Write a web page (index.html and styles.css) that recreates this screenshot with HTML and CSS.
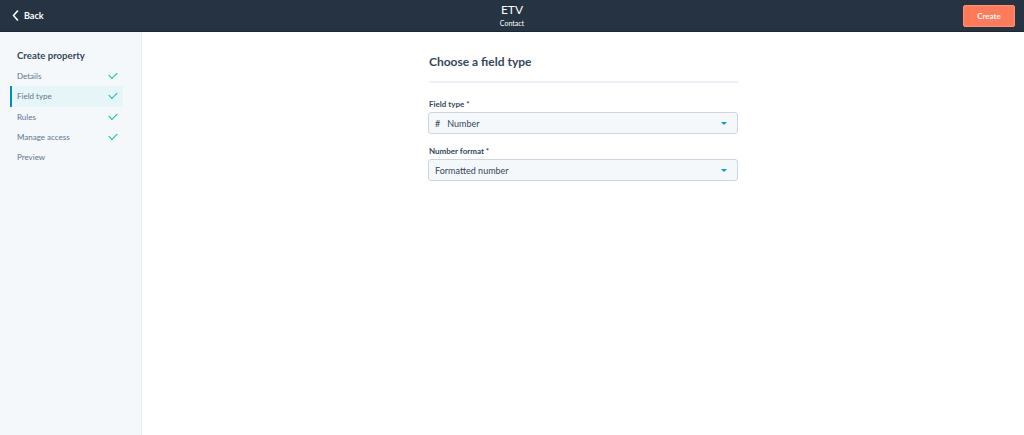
FILE: index.html
```html
<!DOCTYPE HTML>
<html>
<head>
  <meta name="viewport" content="width=device-width, initial-scale=1">
  <title>Create property</title>
  <link rel="stylesheet" href="styles.css">
</head>
<body>
  <div class="topbar">
    <a class="back" href="#">
      <svg width="7" height="11" viewBox="0 0 7 11"><path d="M5.5 1 L1.5 5.5 L5.5 10" fill="none" stroke="#fff" stroke-width="1.6" stroke-linecap="round" stroke-linejoin="round"/></svg>
      Back
    </a>
    <div class="title">
      <div class="name">ETV</div>
      <div class="sub">Contact</div>
    </div>
    <button class="create">Create</button>
  </div>

  <div class="layout">
    <div class="sidebar">
      <h2>Create property</h2>
      <ul class="steps">
        <li>Details <span class="check"></span></li>
        <li class="active">Field type <span class="check"></span></li>
        <li>Rules <span class="check"></span></li>
        <li>Manage access <span class="check"></span></li>
        <li>Preview</li>
      </ul>
    </div>

    <div class="main">
      <div class="form">
        <h1>Choose a field type</h1>

        <label class="label">Field type *</label>
        <div class="select">
          <span class="hash">#</span>
          <span class="value">Number</span>
          <span class="caret"></span>
        </div>

        <label class="label">Number format *</label>
        <div class="select">
          <span class="value">Formatted number</span>
          <span class="caret"></span>
        </div>
      </div>
    </div>
  </div>
</body>
</html>
```

FILE: styles.css
```css
body {
  margin: 0;
  font-family: Lato, "Open Sans", Arial, sans-serif;
  color: #33475b;
  background-color: #fff;
}

.topbar {
  height: 31px;
  background-color: #253342;
  border-bottom: 1px solid #1b2633;
  display: flex;
  align-items: center;
  justify-content: space-between;
  padding: 0 9px 0 12px;
  position: relative;
}

.back {
  display: flex;
  align-items: center;
  gap: 5px;
  color: #fff;
  text-decoration: none;
  font-size: 9px;
  font-weight: bold;
}

.title {
  position: absolute;
  left: 0;
  right: 0;
  top: 3px;
  text-align: center;
  color: #fff;
  pointer-events: none;
}

.title .name {
  font-size: 12px;
  line-height: 14px;
}

.title .sub {
  font-size: 7px;
  line-height: 12px;
}

.create {
  background-color: #ff7a59;
  color: #fff;
  border: 1px solid #ff8f73;
  border-radius: 2px;
  font-family: inherit;
  font-size: 8px;
  font-weight: bold;
  width: 52px;
  height: 22px;
  padding: 0;
}

.layout {
  display: flex;
  height: 403px;
}

.sidebar {
  width: 142px;
  background-color: #f5f8fa;
  border-right: 1px solid #e5ebf1;
  padding-top: 17px;
  box-sizing: border-box;
}

.sidebar h2 {
  font-size: 9.6px;
  font-weight: bold;
  margin: 0 0 3px 17px;
  color: #33475b;
  line-height: 14px;
}

.steps {
  list-style: none;
  margin: 0;
  padding: 0 18px 0 10px;
}

.steps li {
  height: 20.3px;
  display: flex;
  align-items: center;
  justify-content: space-between;
  padding: 0 6px 0 5px;
  font-size: 8px;
  color: #5e7590;
  border-left: 2px solid transparent;
}

.steps li.active {
  background-color: #e5f5f8;
  border-left-color: #0091ae;
}

.check {
  width: 7px;
  height: 4px;
  border-left: 1.5px solid #00bda5;
  border-bottom: 1.5px solid #00bda5;
  transform: rotate(-45deg);
  margin-top: -3px;
}

.main {
  flex: 1;
  display: flex;
  justify-content: center;
}

.form {
  width: 310px;
  padding-top: 23px;
}

.form h1 {
  font-size: 12px;
  font-weight: bold;
  margin: 0 0 16px 1px;
  padding-bottom: 12px;
  border-bottom: 2px solid #eaf0f6;
  line-height: 14px;
}

.label {
  display: block;
  font-size: 8px;
  font-weight: bold;
  margin: 0 0 3px 1px;
  line-height: 10px;
  color: #33475b;
}

.select {
  height: 20px;
  background-color: #f5f8fa;
  border: 1px solid #cbd6e2;
  border-radius: 3px;
  display: flex;
  align-items: center;
  padding: 0 10px 0 6px;
  font-size: 9px;
  color: #33475b;
  margin-bottom: 12px;
}

.hash {
  margin-right: 7px;
  font-size: 9px;
}

.value {
  flex: 1;
}

.caret {
  width: 0;
  height: 0;
  border-left: 3px solid transparent;
  border-right: 3px solid transparent;
  border-top: 3px solid #00a4bd;
}
```
